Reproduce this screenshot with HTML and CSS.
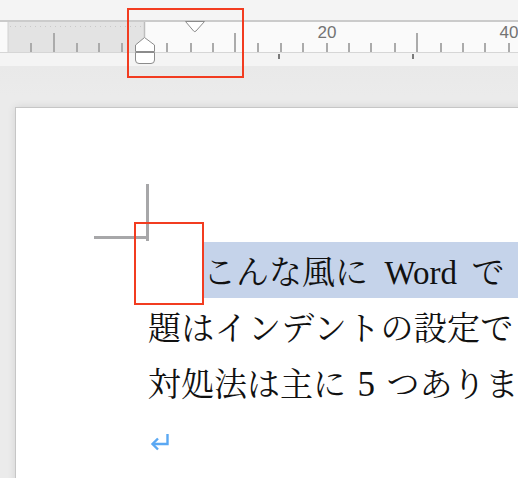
FILE: index.html
```html
<!DOCTYPE html>
<html lang="ja">
<head>
<meta charset="utf-8">
<link rel="stylesheet" href="styles.css">
</head>
<body>
<div class="app">
  <header class="topbar">
    <div class="ruler">
      <svg class="ruler-svg" width="518" height="30" viewBox="0 0 518 30">
        <rect x="8" y="0" width="136" height="30" fill="#e3e3e3"/>
        <line x1="8" y1="0" x2="8" y2="30" stroke="#d2d2d2" stroke-width="1"/>
        <line x1="10" y1="4.5" x2="144" y2="4.5" stroke="#c9c9c9" stroke-width="1" stroke-dasharray="1 4"/>
        <line x1="144.5" y1="0" x2="144.5" y2="15" stroke="#bdbdbd" stroke-width="1.5"/>
        <g stroke="#ababab" stroke-width="2">
          <line x1="31" y1="21" x2="31" y2="30"/>
          <line x1="54" y1="11" x2="54" y2="30"/>
          <line x1="77" y1="21" x2="77" y2="30"/>
          <line x1="99" y1="21" x2="99" y2="30"/>
          <line x1="122" y1="21" x2="122" y2="30"/>
          <line x1="167" y1="21" x2="167" y2="30"/>
          <line x1="191" y1="21" x2="191" y2="30"/>
          <line x1="213" y1="21" x2="213" y2="30"/>
          <line x1="235" y1="11" x2="235" y2="30"/>
          <line x1="258" y1="21" x2="258" y2="30"/>
          <line x1="281" y1="21" x2="281" y2="30"/>
          <line x1="303" y1="21" x2="303" y2="30"/>
          <line x1="327" y1="21" x2="327" y2="30"/>
          <line x1="349" y1="21" x2="349" y2="30"/>
          <line x1="371" y1="21" x2="371" y2="30"/>
          <line x1="395" y1="21" x2="395" y2="30"/>
          <line x1="417" y1="11" x2="417" y2="30"/>
          <line x1="441" y1="21" x2="441" y2="30"/>
          <line x1="463" y1="21" x2="463" y2="30"/>
          <line x1="485" y1="21" x2="485" y2="30"/>
          <line x1="509" y1="21" x2="509" y2="30"/>
        </g>
        <text x="327" y="16" class="ruler-num" text-anchor="middle">20</text>
        <text x="509" y="16" class="ruler-num" text-anchor="middle">40</text>
      </svg>
    </div>
    <svg class="markers" width="518" height="66" viewBox="0 0 518 66">
      <line x1="279" y1="54" x2="279" y2="59" stroke="#7a7a7a" stroke-width="2"/>
      <line x1="413" y1="54" x2="413" y2="59" stroke="#7a7a7a" stroke-width="2"/>
      <path d="M185.5 21.5 L204.5 21.5 L196 31 Q194.8 32.3 193.6 31 Z" fill="#fff" stroke="#8c8c8c" stroke-width="1"/>
      <path d="M135.5 51.5 L135.5 45 L144.5 37.5 L154.5 45 L154.5 51.5 Z" fill="#fff" stroke="#8c8c8c" stroke-width="1"/>
      <path d="M135.5 52.5 L154.5 52.5 L154.5 60 Q154.5 63.5 151 63.5 L139 63.5 Q135.5 63.5 135.5 60 Z" fill="#fff" stroke="#8c8c8c" stroke-width="1"/>
    </svg>
    <div class="callout callout-ruler"></div>
  </header>
  <main class="workspace">
    <section class="page">
      <div class="crop crop-v"></div>
      <div class="crop crop-h"></div>
      <div class="callout callout-page"></div>
      <div class="para">
        <div class="line line-first"><span class="sel">こんな風に <span class="latin latin-word">Word</span> で</span></div>
        <div class="line line-body">題はインデントの設定で</div>
        <div class="line">対処法は主に <span class="latin latin-num">5</span> つありま</div>
        <div class="line line-mark">
          <svg class="return" width="20" height="19" viewBox="0 0 20 19">
            <path d="M17.5 1 V11 H3" fill="none" stroke="#5aa8f3" stroke-width="2.4"/>
            <path d="M8 5.5 L2.5 11 L8 16.5" fill="none" stroke="#5aa8f3" stroke-width="2.4"/>
          </svg>
        </div>
      </div>
    </section>
  </main>
</div>
</body>
</html>
```

FILE: styles.css
```css
html, body {
  margin: 0;
  padding: 0;
  width: 518px;
  height: 478px;
  overflow: hidden;
  background: #ebebeb;
}

.app {
  display: flex;
  flex-direction: column;
  width: 518px;
  height: 478px;
}

.topbar {
  position: relative;
  height: 66px;
  background: #f4f4f4;
  padding-top: 20px;
  box-sizing: border-box;
  flex: none;
}

.ruler {
  height: 30px;
  background: #fafafa;
  border-top: 2px solid #cbcbcb;
  border-bottom: 1px solid #d6d6d6;
}

.ruler-svg {
  display: block;
}

.ruler-num {
  font-family: "Liberation Sans", Arial, sans-serif;
  font-size: 17px;
  fill: #737373;
}

.markers {
  position: absolute;
  left: 0;
  top: 0;
}

.callout {
  position: absolute;
  border: 2px solid #f23c20;
  box-sizing: border-box;
}

.callout-ruler {
  left: 127px;
  top: 8px;
  width: 117px;
  height: 70px;
}

.workspace {
  flex: 1;
  padding: 41px 0 0 15px;
  background: linear-gradient(#e9e9e9, #ebebeb 30px);
  overflow: hidden;
}

.page {
  position: relative;
  width: 800px;
  height: 500px;
  background: #ffffff;
  border: 1px solid #c6c6c6;
  box-shadow: 0 0 8px rgba(0, 0, 0, 0.1);
  padding: 134px 0 0 132px;
  box-sizing: border-box;
}

.crop {
  position: absolute;
  background: #a7a7a9;
}

.crop-v {
  left: 130px;
  top: 76px;
  width: 3px;
  height: 57px;
}

.crop-h {
  left: 78px;
  top: 128px;
  width: 55px;
  height: 3px;
}

.callout-page {
  left: 118px;
  top: 114px;
  width: 70px;
  height: 83px;
  z-index: 2;
}

.para {
  font-family: "Noto Serif CJK JP", "Noto Sans CJK JP", serif;
  font-size: 33px;
  line-height: 56px;
  color: #111111;
}

.line {
  white-space: nowrap;
  height: 56px;
}

.line-body {
  letter-spacing: 0.3px;
}

.line-first {
  padding-left: 55px;
}

.sel {
  display: inline-block;
  background: #c5d3ea;
  padding-right: 300px;
  height: 56px;
}

.latin {
  font-family: "Liberation Serif", "Times New Roman", serif;
}

.latin-word {
  margin: 0 6px 0 8px;
}

.latin-num {
  margin: 0 3px;
  font-size: 35px;
}

.line-mark {
  display: flex;
  align-items: center;
}

.return {
  display: block;
  margin: 8px 0 0 2px;
}
```
